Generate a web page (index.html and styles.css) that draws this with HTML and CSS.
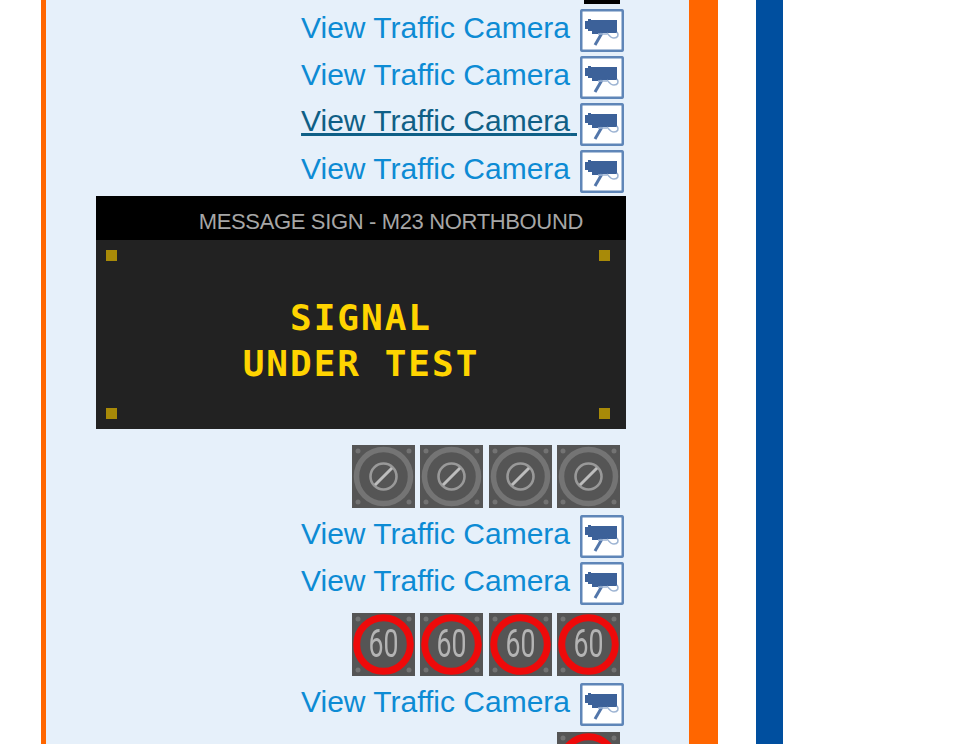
FILE: index.html
```html
<!DOCTYPE html>
<html lang="en">
<head>
  <meta charset="UTF-8" />
  <meta name="viewport" content="width=device-width, initial-scale=1.0"/>
  <title>Motorway signals</title>
  <link rel="stylesheet" href="styles.css">
</head>
<body>
  <svg class="defs" width="0" height="0">
    <symbol id="cam" viewBox="0 0 44 43">
      <rect x="1.2" y="1.2" width="41.6" height="40.6" rx="1.5" fill="#fff" stroke="#5f86b8" stroke-width="2.6"/>
      <path d="M5 12h3v-2h3v1h26v13H21v1h-9v-3H8v-2H5z" fill="#3c6199"/>
      <path d="M22 24l-7 12" fill="none" stroke="#5276aa" stroke-width="3"/>
      <path d="M18 25h9M27 24c2 2 3 5 7 5 4 0 5-3 3-6" fill="none" stroke="#9db4d3" stroke-width="1.6"/>
    </symbol>
    <symbol id="blank" viewBox="0 0 63 63">
      <rect width="63" height="63" fill="#555"/>
      <g fill="#737373"><circle cx="6" cy="6" r="2.5"/><circle cx="57" cy="6" r="2.5"/><circle cx="6" cy="57" r="2.5"/><circle cx="57" cy="57" r="2.5"/></g>
      <circle cx="31.5" cy="31.5" r="27" fill="none" stroke="#747474" stroke-width="5.5"/>
      <circle cx="31.5" cy="31.5" r="13" fill="none" stroke="#999" stroke-width="2.6"/>
      <path d="M23 40l17-17" stroke="#bdbdbd" stroke-width="3"/>
    </symbol>
    <symbol id="limit" viewBox="0 0 63 63">
      <rect width="63" height="63" fill="#555"/>
      <g fill="#737373"><circle cx="6" cy="6" r="2.5"/><circle cx="57" cy="6" r="2.5"/><circle cx="6" cy="57" r="2.5"/><circle cx="57" cy="57" r="2.5"/></g>
      <circle cx="31.5" cy="31.5" r="26.8" fill="none" stroke="#ee0a0a" stroke-width="7"/>
    </symbol>
  </svg>

  <div class="page">
    <main class="panel">
      <div class="stub"></div>

      <div class="cam-row"><a href="#" class="cam-link">View Traffic Camera</a><svg class="cam-icon"><use href="#cam"/></svg></div>
      <div class="cam-row"><a href="#" class="cam-link">View Traffic Camera</a><svg class="cam-icon"><use href="#cam"/></svg></div>
      <div class="cam-row"><a href="#" class="cam-link hover">View Traffic Camera<span class="trail">&nbsp;</span></a><svg class="cam-icon"><use href="#cam"/></svg></div>
      <div class="cam-row"><a href="#" class="cam-link">View Traffic Camera</a><svg class="cam-icon"><use href="#cam"/></svg></div>

      <section class="sign">
        <div class="sign-title">MESSAGE SIGN - M23 NORTHBOUND</div>
        <div class="sign-face">
          <span class="lamp tl"></span><span class="lamp tr"></span>
          <span class="lamp bl"></span><span class="lamp br"></span>
          <p class="sign-text">SIGNAL<br>UNDER TEST</p>
        </div>
      </section>

      <div class="signals first">
        <svg class="signal"><use href="#blank"/></svg>
        <svg class="signal"><use href="#blank"/></svg>
        <svg class="signal"><use href="#blank"/></svg>
        <svg class="signal"><use href="#blank"/></svg>
      </div>

      <div class="cam-row after"><a href="#" class="cam-link">View Traffic Camera</a><svg class="cam-icon"><use href="#cam"/></svg></div>
      <div class="cam-row"><a href="#" class="cam-link">View Traffic Camera</a><svg class="cam-icon"><use href="#cam"/></svg></div>

      <div class="signals second">
        <svg class="signal" viewBox="0 0 63 63"><use href="#limit" width="63" height="63"/><text x="31.5" y="44" textLength="30" lengthAdjust="spacingAndGlyphs">60</text></svg>
        <svg class="signal" viewBox="0 0 63 63"><use href="#limit" width="63" height="63"/><text x="31.5" y="44" textLength="30" lengthAdjust="spacingAndGlyphs">60</text></svg>
        <svg class="signal" viewBox="0 0 63 63"><use href="#limit" width="63" height="63"/><text x="31.5" y="44" textLength="30" lengthAdjust="spacingAndGlyphs">60</text></svg>
        <svg class="signal" viewBox="0 0 63 63"><use href="#limit" width="63" height="63"/><text x="31.5" y="44" textLength="30" lengthAdjust="spacingAndGlyphs">60</text></svg>
      </div>

      <div class="cam-row after"><a href="#" class="cam-link">View Traffic Camera</a><svg class="cam-icon"><use href="#cam"/></svg></div>

      <div class="signals last">
        <svg class="signal"><use href="#limit"/></svg>
      </div>
    </main>
    <div class="edge-orange"></div>
    <div class="edge-blue"></div>
  </div>
</body>
</html>
```

FILE: styles.css
```css
html, body {
  margin: 0;
  height: 744px;
  overflow: hidden;
  background: #fff;
  font-family: "Liberation Sans", Arial, sans-serif;
}

.defs {
  display: block;
  height: 0;
}

.page {
  display: flex;
  height: 744px;
  padding-left: 41px;
}

.panel {
  width: 648px;
  box-sizing: border-box;
  height: 744px;
  overflow: hidden;
  padding-right: 65px;
  background: #e6f0fa;
  border-left: 5px solid #ff6600;
}

.edge-orange {
  width: 29px;
  background: #ff6600;
}

.edge-blue {
  width: 27px;
  margin-left: 38px;
  background: #004f9f;
}

.stub {
  width: 36px;
  height: 4px;
  margin: 0 4px 5px auto;
  background: #000;
}

.cam-row {
  display: flex;
  justify-content: flex-end;
  align-items: center;
  height: 43px;
  margin-bottom: 4px;
}

.cam-row.after {
  margin-top: 7px;
}

.cam-link {
  margin-right: 10px;
  padding-bottom: 6px;
  font-size: 30px;
  line-height: 34px;
  color: #0d8bd4;
  text-decoration: none;
}

.cam-link.hover {
  margin-right: 3px;
  color: #0f5f86;
  text-decoration: underline;
}

.trail {
  font-size: 25px;
}

.cam-icon {
  display: block;
  width: 44px;
  height: 43px;
  filter: blur(0.4px);
}

.sign {
  width: 530px;
  margin: -1px -2px 16px auto;
}

.sign-title {
  height: 44px;
  padding-right: 43px;
  text-align: right;
  font-size: 22px;
  line-height: 52px;
  letter-spacing: -0.35px;
  color: #a6a6a6;
  background: #000;
}

.sign-face {
  position: relative;
  box-sizing: border-box;
  height: 189px;
  padding-top: 12px;
  display: flex;
  align-items: center;
  justify-content: center;
  background: #222;
}

.sign-text {
  margin: 0;
  text-align: center;
  font-family: "DejaVu Sans Mono", monospace;
  font-weight: bold;
  font-size: 36px;
  line-height: 46px;
  letter-spacing: 2px;
  color: #ffd400;
}

.lamp {
  position: absolute;
  width: 11px;
  height: 11px;
  background: #a88a08;
}

.lamp.tl { left: 10px; top: 10px; }
.lamp.tr { right: 16px; top: 10px; }
.lamp.bl { left: 10px; bottom: 10px; }
.lamp.br { right: 16px; bottom: 10px; }

.signals {
  display: flex;
  justify-content: flex-end;
  gap: 5.5px;
  margin-right: 4px;
}

.signals.first {
  margin-bottom: 7px;
}

.signals.second {
  margin-top: 8px;
}

.signals.last {
  margin-top: 6px;
}

.signals .signal {
  display: block;
  width: 63px;
  height: 63px;
  filter: blur(0.4px);
}

.signal text {
  font-family: Roboto, "Liberation Sans", sans-serif;
  font-size: 38px;
  fill: #b4b4b4;
  text-anchor: middle;
}
```
